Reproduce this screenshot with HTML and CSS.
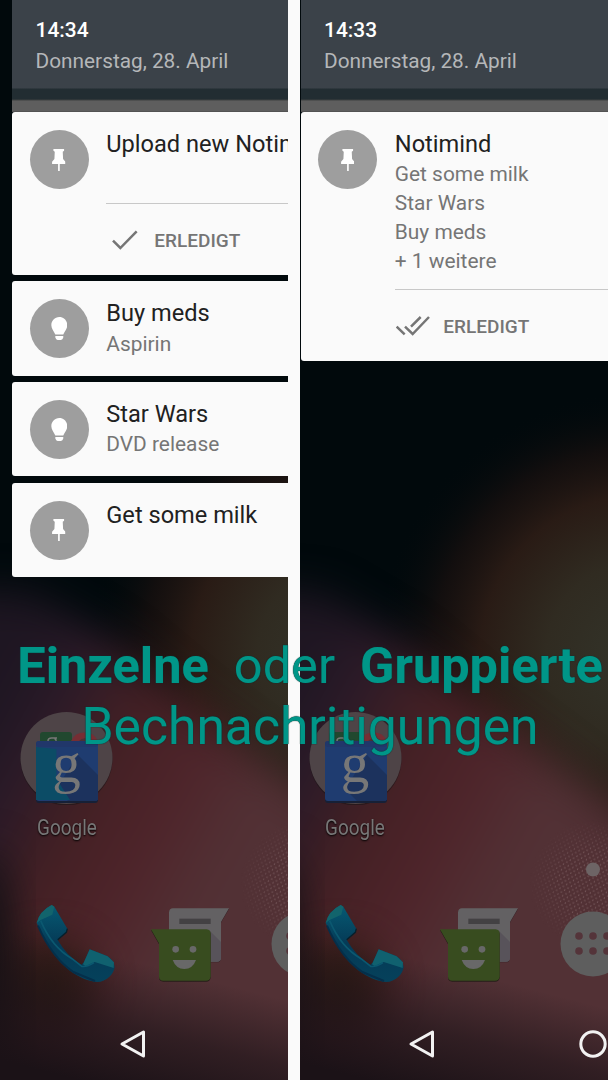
FILE: index.html
```html
<!DOCTYPE html>
<html lang="de">
<head>
    <meta charset="UTF-8">
    <meta name="viewport" content="width=device-width, initial-scale=1.0">
    <title>Notimind</title>
    <link rel="stylesheet" href="styles.css">
</head>
<body>
    <!-- Icons -->
    <svg class="defs" width="0" height="0">
        <defs>
            <filter id="soft" x="-50%" y="-50%" width="200%" height="200%" color-interpolation-filters="sRGB"><feGaussianBlur stdDeviation="20"/></filter>
            <radialGradient id="olive" gradientUnits="userSpaceOnUse" cx="350" cy="655" r="265">
                <stop offset="0" stop-color="#33342a"/>
                <stop offset=".35" stop-color="#302b21"/>
                <stop offset=".6" stop-color="#291b15"/>
                <stop offset=".78" stop-color="#17100f" stop-opacity=".8"/>
                <stop offset="1" stop-color="#01090c" stop-opacity="0"/>
            </radialGradient>
            <linearGradient id="red" gradientUnits="userSpaceOnUse" x1="-39" y1="760" x2="207" y2="895">
                <stop offset="0" stop-color="#1e1622"/>
                <stop offset=".19" stop-color="#2a1a28"/>
                <stop offset=".45" stop-color="#432024"/>
                <stop offset=".72" stop-color="#4e242a"/>
                <stop offset="1" stop-color="#523135"/>
            </linearGradient>
            <linearGradient id="fall" gradientUnits="userSpaceOnUse" x1="130" y1="960" x2="98" y2="1085">
                <stop offset="0" stop-color="#1b1217" stop-opacity="0"/>
                <stop offset=".5" stop-color="#1b1217" stop-opacity=".6"/>
                <stop offset="1" stop-color="#1b1217"/>
            </linearGradient>
            <linearGradient id="receiver" x1="0" y1="0" x2="0" y2="1"><stop offset="0" stop-color="#065a73"/><stop offset=".5" stop-color="#053a56"/><stop offset="1" stop-color="#05415b"/></linearGradient>
            <radialGradient id="fade"><stop offset=".5" stop-color="#fff"/><stop offset="1" stop-color="#000"/></radialGradient>
            <mask id="spot"><circle cx="304" cy="884" r="64" fill="url(#fade)"/></mask>
            <pattern id="dots" width="5" height="6" patternUnits="userSpaceOnUse" patternTransform="rotate(20)"><circle cx="1" cy="1" r=".6" fill="#96797b"/><circle cx="3.5" cy="4" r=".6" fill="#96797b"/></pattern>
        </defs>
        <symbol id="wallpaper" viewBox="0 0 330 1080">
            <rect width="330" height="1080" fill="#01090c"/>
            <rect y="380" width="330" height="540" fill="url(#olive)"/>
            <path d="M-80 590L30 592L115 642L190 705L350 825L420 870V1180H-80Z" fill="url(#red)" filter="url(#soft)"/>
            <ellipse cx="50" cy="985" rx="45" ry="45" fill="#2a1a12" opacity=".85" filter="url(#soft)"/>
            <ellipse cx="-12" cy="970" rx="24" ry="120" fill="#0f0f12" filter="url(#soft)"/>
            <rect y="920" width="330" height="160" fill="url(#fall)"/>
            <rect x="240" y="810" width="90" height="140" fill="url(#dots)" mask="url(#spot)"/>
            <circle cx="304" cy="869.5" r="7" fill="#6d6465"/>
        </symbol>
        <symbol id="pin" viewBox="0 0 40 66">
            <path d="M4 0H36V5L32 8L33 30L40 38V45H23V66H18V45H0V38L7 30L8 8L4 5Z" fill="#fff"/>
        </symbol>
        <symbol id="bulb" viewBox="0 0 50 70">
            <path d="M25 0C11 0 1 11 1 25C1 35 8 41 13 53H37C42 41 49 35 49 25C49 11 39 0 25 0ZM13 57H37V62Q35 69 30 69H20Q15 69 13 62Z" fill="#fff"/>
        </symbol>
        <symbol id="check" viewBox="0 0 78 60">
            <path d="M3 32L25 54L74 4" fill="none" stroke="#757575" stroke-width="7.5"/>
        </symbol>
        <symbol id="check-all" viewBox="0 0 102 60">
            <path d="M2 32L26 55M27 32L50 54L99 3M45 32L74 3" fill="none" stroke="#757575" stroke-width="7.5"/>
        </symbol>
        <symbol id="folder" viewBox="0 0 93 93">
            <circle cx="46.5" cy="47.5" r="46" fill="#1d1518" opacity=".6"/>
            <circle cx="46.5" cy="46" r="46" fill="#4e4447"/>
            <rect x="20" y="20" width="32" height="20" rx="3" fill="#21482f"/>
            <path d="M28 29Q28 26 31.500 26H37M34.500 26.500Q36.500 27.500 36 29" fill="none" stroke="#777" stroke-width="1.500"/>
            <path d="M51 29A15 15 0 0 1 78 29Z" fill="#752e34"/>
            <path d="M59 29A8 8 0 0 1 71 29Z" fill="#4e3034"/>
        </symbol>
        <symbol id="google" viewBox="0 0 62 62">
            <rect y="1" width="62" height="61" rx="3" fill="#172036"/>
            <rect width="62" height="60" rx="3" fill="#1f3c70"/>
            <path d="M42 14L62 34V57Q62 60 59 60H32L20 48Z" fill="#1c325d"/>
            <rect width="62" height="6" rx="3" fill="#21376a"/>
        </symbol>
        <symbol id="phone" viewBox="108 190 240 240">
            <path d="M155 193L163 198L202 264L199 275L173 297Q200 346 244 372L252 365L269 326L323 347Q341 358 344 379C342 399 320 424 291 424C235 418 180 374 151 324Q127 289 110 247Q118 212 155 193Z" fill="url(#receiver)"/>
            <path d="M155 193L163 198L157 222L122 238L110 247Q118 212 155 193Z" fill="#12646c"/>
            <path d="M269 326L323 347L342 365L341 382L284 364L257 377L249 371Z" fill="#10616f"/>
            <path d="M122 240Q155 319 216 354L245 377Q260 380 282 366" fill="none" stroke="#0b5870" stroke-width="5"/>
            <path d="M114 255Q155 350 220 394L285 421" fill="none" stroke="#042f4b" stroke-width="6"/>
            <path d="M202 264L199 275L173 297" fill="none" stroke="#07202c" stroke-width="4"/>
        </symbol>
        <symbol id="messages" viewBox="450 198 240 228">
            <path d="M519 204H687L663 245V350Q663 364 650 364H507V216Q508 204 519 204Z" fill="#342125"/>
            <path d="M519 202H687L663 243V350Q663 362 650 362H507V214Q508 202 519 202Z" fill="#636163"/>
            <path d="M630 270L663 303V350Q663 362 650 362H630Z" fill="#58535a"/>
            <rect x="538" y="233" width="94" height="16" fill="#434143"/>
            <path d="M453 268H620Q632 270 632 280V410Q630 422 618 422H490Q477 420 477 410V310Z" fill="#261e18"/>
            <path d="M453 265H620Q632 266 632 278V407Q630 419 618 419H490Q477 418 477 407V307Z" fill="#384c1f"/>
            <circle cx="527" cy="325" r="10" fill="#686868"/>
            <circle cx="579" cy="325" r="10" fill="#686868"/>
            <path d="M518 357H588Q578 384 553 384Q528 384 518 357Z" fill="#686868"/>
        </symbol>
        <symbol id="apps" viewBox="0 0 66 66">
            <circle cx="33" cy="33" r="32.5" fill="#5e5e5e"/>
            <g fill="#54343a">
                <circle cx="19" cy="25" r="3.8"/><circle cx="33" cy="25" r="3.8"/><circle cx="47" cy="25" r="3.8"/>
                <circle cx="19" cy="40" r="3.8"/><circle cx="33" cy="40" r="3.8"/><circle cx="47" cy="40" r="3.8"/>
            </g>
        </symbol>
        <symbol id="back" viewBox="0 0 28 30">
            <path d="M3 15L24.5 3V27Z" fill="none" stroke="#f2f2f2" stroke-width="3" stroke-linejoin="round"/>
        </symbol>
        <symbol id="home" viewBox="0 0 28 28">
            <circle cx="14" cy="14" r="12.2" fill="none" stroke="#f2f2f2" stroke-width="3"/>
        </symbol>
    </svg>

    <div class="compare">
        <!-- Einzelne Benachrichtigungen -->
        <div class="device device-left">
            <div class="screen">
                <svg class="wallpaper"><use href="#wallpaper"/></svg>
                <div class="launcher">
                    <div class="app">
                        <svg class="folder"><use href="#folder"/></svg>
                        <svg class="google"><use href="#google"/></svg>
                        <span class="letter">g</span>
                        <span class="app-label">Google</span>
                    </div>
                    <div class="dock">
                        <svg class="phone"><use href="#phone"/></svg>
                        <svg class="messages"><use href="#messages"/></svg>
                        <svg class="apps"><use href="#apps"/></svg>
                    </div>
                    <div class="nav">
                        <svg class="back"><use href="#back"/></svg>
                        <svg class="home"><use href="#home"/></svg>
                    </div>
                </div>
                <div class="shade">
                    <div class="status">
                        <div class="time">14:34</div>
                        <div class="date">Donnerstag, 28. April</div>
                    </div>
                    <div class="card card-single">
                        <div class="badge"><svg class="pin"><use href="#pin"/></svg></div>
                        <div class="content">
                            <div class="title">Upload new Notimind</div>
                            <div class="action">
                                <svg class="check"><use href="#check"/></svg>
                                <span>ERLEDIGT</span>
                            </div>
                        </div>
                    </div>
                    <div class="card">
                        <div class="badge"><svg class="bulb"><use href="#bulb"/></svg></div>
                        <div class="content">
                            <div class="title">Buy meds</div>
                            <div class="text">Aspirin</div>
                        </div>
                    </div>
                    <div class="card">
                        <div class="badge"><svg class="bulb"><use href="#bulb"/></svg></div>
                        <div class="content">
                            <div class="title">Star Wars</div>
                            <div class="text">DVD release</div>
                        </div>
                    </div>
                    <div class="card">
                        <div class="badge"><svg class="pin"><use href="#pin"/></svg></div>
                        <div class="content">
                            <div class="title">Get some milk</div>
                        </div>
                    </div>
                </div>
            </div>
        </div>

        <!-- Gruppierte Benachrichtigungen -->
        <div class="device device-right">
            <div class="screen">
                <svg class="wallpaper"><use href="#wallpaper"/></svg>
                <div class="launcher">
                    <div class="app">
                        <svg class="folder"><use href="#folder"/></svg>
                        <svg class="google"><use href="#google"/></svg>
                        <span class="letter">g</span>
                        <span class="app-label">Google</span>
                    </div>
                    <div class="dock">
                        <svg class="phone"><use href="#phone"/></svg>
                        <svg class="messages"><use href="#messages"/></svg>
                        <svg class="apps"><use href="#apps"/></svg>
                    </div>
                    <div class="nav">
                        <svg class="back"><use href="#back"/></svg>
                        <svg class="home"><use href="#home"/></svg>
                    </div>
                </div>
                <div class="shade">
                    <div class="status">
                        <div class="time">14:33</div>
                        <div class="date">Donnerstag, 28. April</div>
                    </div>
                    <div class="card card-group">
                        <div class="badge"><svg class="pin"><use href="#pin"/></svg></div>
                        <div class="content">
                            <div class="title">Notimind</div>
                            <div class="text">Get some milk</div>
                            <div class="text">Star Wars</div>
                            <div class="text">Buy meds</div>
                            <div class="text">+ 1 weitere</div>
                            <div class="action">
                                <svg class="check-all"><use href="#check-all"/></svg>
                                <span>ERLEDIGT</span>
                            </div>
                        </div>
                    </div>
                </div>
            </div>
        </div>

        <h1 class="caption">
            <span class="line"><b>Einzelne</b> <span>oder</span> <b>Gruppierte</b></span>
            <span class="line line-wide">Bechnachritigungen</span>
        </h1>
    </div>
</body>
</html>
```

FILE: styles.css
```css
* {
    box-sizing: border-box;
}
body {
    margin: 0;
    background: #fafafa;
    font-family: Roboto, "Liberation Sans", sans-serif;
}
svg {
    display: block;
    flex: none;
}
.defs {
    position: absolute;
}
.compare {
    position: relative;
    display: flex;
    justify-content: space-between;
    width: 608px;
    height: 1080px;
    overflow: hidden;
}
.device {
    overflow: hidden;
    height: 1080px;
}
.device-left {
    width: 288px;
}
.device-right {
    width: 308px;
}
.device-right .screen {
    margin-left: -11.5px;
}
.screen {
    position: relative;
    width: 330px;
    height: 1080px;
}
.wallpaper {
    position: absolute;
    width: 330px;
    height: 1080px;
}

/* Launcher */
.launcher {
    position: relative;
    display: flex;
    flex-direction: column;
    padding-top: 712px;
}
.app {
    position: relative;
    width: 93px;
    height: 191px;
    margin-left: 20px;
    text-align: center;
}
.folder {
    width: 93px;
    height: 93px;
}
.google {
    position: absolute;
    left: 16px;
    top: 29px;
    width: 62px;
    height: 62px;
}
.device-left .app::after {
    content: "";
    position: absolute;
    left: 16px;
    top: 35px;
    width: 34px;
    height: 53px;
    background: #0c4c66;
    clip-path: polygon(0 0, 60% 4%, 60% 60%, 100% 100%, 0 100%);
}
.letter {
    position: absolute;
    left: 15.5px;
    top: 22px;
    z-index: 1;
    width: 62px;
    font-family: "Liberation Serif", serif;
    font-size: 57px;
    line-height: 58px;
    color: #777;
}
.app-label {
    display: inline-block;
    margin-top: 10px;
    font-size: 21.5px;
    line-height: 26px;
    color: #777;
    text-shadow: 0 1px 2px #000;
    transform: scaleX(.88);
}
.dock {
    display: flex;
    align-items: center;
    height: 81px;
    padding-left: 36px;
}
.phone {
    width: 80px;
    height: 80px;
}
.messages {
    width: 80px;
    height: 76px;
    margin: 3px 41px 0 34px;
}
.apps {
    width: 66px;
    height: 66px;
}
.nav {
    display: flex;
    align-items: center;
    margin-top: 45px;
    padding-left: 119px;
}
.back {
    width: 28px;
    height: 30px;
    margin-right: 143px;
}
.home {
    width: 28px;
    height: 28px;
}

/* Notification shade */
.shade {
    position: absolute;
    top: 0;
    left: 12px;
    right: 0;
    display: flex;
    flex-direction: column;
    gap: 6.2px;
}
.status {
    height: 112px;
    margin-bottom: -6.2px;
    padding: 17px 24px 0 23.6px;
    background: linear-gradient(#3b4249 0 88px, #222d32 89px 99px, #3d4040 100px, #5e5e5e 101px 111px, #484848 112px);
}
.time {
    font-size: 20.9px;
    font-weight: 500;
    line-height: 26px;
    color: #fff;
}
.date {
    margin-top: 5px;
    font-size: 20.8px;
    line-height: 26px;
    color: #b5b7b9;
    white-space: nowrap;
}
.card {
    display: flex;
    height: 94.5px;
    padding: 18px 0 0 17.5px;
    background: #fafafa;
    border-radius: 3px 0 0 3px;
}
.card-single {
    height: 163px;
}
.card-group {
    height: 249px;
}
.badge {
    display: flex;
    flex: none;
    align-items: center;
    justify-content: center;
    width: 59px;
    height: 59px;
    margin-right: 17.8px;
    border-radius: 50%;
    background: #9e9e9e;
}
.pin {
    width: 13.5px;
    height: 22px;
}
.bulb {
    width: 16.6px;
    height: 23.3px;
}
.content {
    flex: 1;
    white-space: nowrap;
}
.title {
    font-size: 23.6px;
    line-height: 28px;
    color: #212121;
}
.text {
    font-size: 20.9px;
    line-height: 28.7px;
    color: #757575;
}
.title + .text {
    margin-top: 2.4px;
}
.action {
    display: flex;
    align-items: center;
    height: 73px;
    padding-left: 6px;
    border-top: 1px solid #c8c8c8;
    font-size: 19px;
    font-weight: 500;
    color: #757575;
}
.card-single .action {
    margin-top: 45px;
}
.card-group .action {
    margin-top: 13.8px;
    padding-left: 1.5px;
}
.check {
    width: 26px;
    height: 20px;
    margin-right: 16px;
}
.check-all {
    width: 34px;
    height: 20px;
    margin-right: 13px;
}

/* Caption */
.caption {
    position: absolute;
    top: 634.5px;
    left: 0;
    width: 620px;
    margin: 0;
    font-size: 50.5px;
    font-weight: 400;
    line-height: 61px;
    color: #009688;
    text-shadow: 0 0 1px #123a38, 0 0 1px #123a38;
}
.line {
    display: flex;
    justify-content: center;
    gap: 25px;
}
.line-wide {
    font-size: 51.6px;
}
```
